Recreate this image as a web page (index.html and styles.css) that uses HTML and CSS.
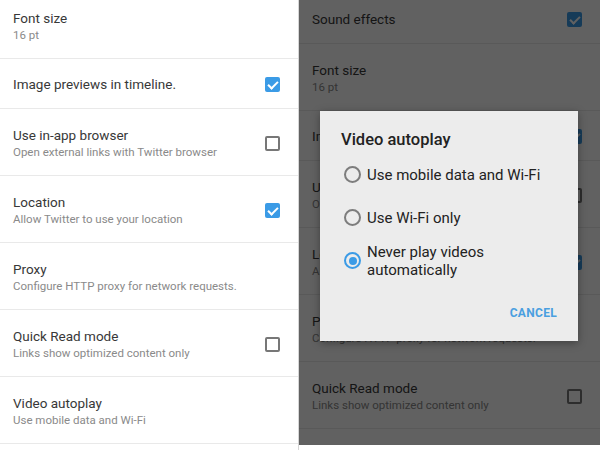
FILE: index.html
```html
<!DOCTYPE html>
<html lang="en">
<head>
    <meta charset="UTF-8">
    <meta name="viewport" content="width=device-width, initial-scale=1.0">
    <title>Twitter Settings - Video autoplay</title>
    <link rel="stylesheet" href="styles.css">
</head>
<body>
    <div class="screen">
        <!-- Left pane: settings list -->
        <div class="pane pane-left">
            <ul class="settings">
                <li class="row">
                    <div class="row-text">
                        <div class="row-title">Font size</div>
                        <div class="row-sub">16 pt</div>
                    </div>
                </li>
                <li class="row row-single">
                    <div class="row-text">
                        <div class="row-title">Image previews in timeline.</div>
                    </div>
                    <span class="check checked"></span>
                </li>
                <li class="row">
                    <div class="row-text">
                        <div class="row-title">Use in-app browser</div>
                        <div class="row-sub">Open external links with Twitter browser</div>
                    </div>
                    <span class="check"></span>
                </li>
                <li class="row">
                    <div class="row-text">
                        <div class="row-title">Location</div>
                        <div class="row-sub">Allow Twitter to use your location</div>
                    </div>
                    <span class="check checked"></span>
                </li>
                <li class="row">
                    <div class="row-text">
                        <div class="row-title">Proxy</div>
                        <div class="row-sub">Configure HTTP proxy for network requests.</div>
                    </div>
                </li>
                <li class="row">
                    <div class="row-text">
                        <div class="row-title">Quick Read mode</div>
                        <div class="row-sub">Links show optimized content only</div>
                    </div>
                    <span class="check"></span>
                </li>
                <li class="row">
                    <div class="row-text">
                        <div class="row-title">Video autoplay</div>
                        <div class="row-sub">Use mobile data and Wi-Fi</div>
                    </div>
                </li>
            </ul>
        </div>

        <!-- Right pane: same list with the autoplay dialog open -->
        <div class="pane pane-right">
            <ul class="settings">
                <li class="row row-single">
                    <div class="row-text">
                        <div class="row-title">Sound effects</div>
                    </div>
                    <span class="check checked"></span>
                </li>
                <li class="row">
                    <div class="row-text">
                        <div class="row-title">Font size</div>
                        <div class="row-sub">16 pt</div>
                    </div>
                </li>
                <li class="row row-single">
                    <div class="row-text">
                        <div class="row-title">Image previews in timeline.</div>
                    </div>
                    <span class="check checked"></span>
                </li>
                <li class="row">
                    <div class="row-text">
                        <div class="row-title">Use in-app browser</div>
                        <div class="row-sub">Open external links with Twitter browser</div>
                    </div>
                    <span class="check"></span>
                </li>
                <li class="row">
                    <div class="row-text">
                        <div class="row-title">Location</div>
                        <div class="row-sub">Allow Twitter to use your location</div>
                    </div>
                    <span class="check checked"></span>
                </li>
                <li class="row">
                    <div class="row-text">
                        <div class="row-title">Proxy</div>
                        <div class="row-sub">Configure HTTP proxy for network requests.</div>
                    </div>
                </li>
                <li class="row">
                    <div class="row-text">
                        <div class="row-title">Quick Read mode</div>
                        <div class="row-sub">Links show optimized content only</div>
                    </div>
                    <span class="check"></span>
                </li>
            </ul>

            <div class="scrim"></div>

            <div class="dialog">
                <div class="dialog-title">Video autoplay</div>
                <div class="options">
                    <label class="option">
                        <span class="radio"></span>
                        <span class="option-text">Use mobile data and Wi-Fi</span>
                    </label>
                    <label class="option">
                        <span class="radio"></span>
                        <span class="option-text">Use Wi-Fi only</span>
                    </label>
                    <label class="option">
                        <span class="radio selected"></span>
                        <span class="option-text">Never play videos<br>automatically</span>
                    </label>
                </div>
                <div class="dialog-actions">
                    <span class="btn-text">CANCEL</span>
                </div>
            </div>
        </div>
    </div>
</body>
</html>
```

FILE: styles.css
```css
body {
    margin: 0;
    font-family: Roboto, "Liberation Sans", Arial, sans-serif;
    background-color: #fff;
    color: #333;
}

.screen {
    display: flex;
    width: 600px;
    height: 450px;
    overflow: hidden;
}

.pane {
    position: relative;
    overflow: hidden;
    box-sizing: border-box;
}

.pane-left {
    width: 299px;
    height: 450px;
    border-right: 1px solid #d6d6d6;
}

.pane-right {
    width: 301px;
    height: 445px;
    background-color: #fff;
}

.settings {
    list-style: none;
    margin: 0;
    padding: 0;
}

.pane-left .settings {
    margin-top: -8px;
}

.pane-right .settings {
    margin-top: -6px;
}

.row {
    display: flex;
    align-items: center;
    justify-content: space-between;
    padding: 17px 18px 15px 13px;
    border-bottom: 1px solid #e9e9e9;
}

.row-single {
    padding-top: 16px;
    padding-bottom: 15px;
}

.row-title {
    font-size: 13.5px;
    line-height: 18px;
    color: #383838;
}

.row-sub {
    font-size: 11.5px;
    line-height: 16px;
    color: #8a8a8a;
}

/* Checkboxes */
.check {
    flex: none;
    width: 15px;
    height: 15px;
    box-sizing: border-box;
    border: 2px solid #777;
    border-radius: 2px;
}

.check.checked {
    border: none;
    background-color: #3b9be6;
    position: relative;
}

.check.checked::after {
    content: "";
    position: absolute;
    left: 5px;
    top: 2px;
    width: 4px;
    height: 8px;
    border: solid #fff;
    border-width: 0 2px 2px 0;
    transform: rotate(45deg);
}

/* Dimmed background behind the dialog */
.scrim {
    position: absolute;
    inset: 0;
    background-color: rgba(0, 0, 0, 0.62);
}

.dialog {
    position: absolute;
    left: 21px;
    top: 111px;
    width: 258px;
    background-color: #ececec;
    box-shadow: 0 2px 8px rgba(0, 0, 0, 0.35);
}

.dialog-title {
    padding: 17px 21px 0;
    font-size: 16.5px;
    line-height: 24px;
    font-weight: 500;
    color: #222;
}

.options {
    display: flex;
    flex-direction: column;
    padding-top: 1px;
}

.option {
    display: flex;
    align-items: center;
    gap: 6px;
    min-height: 43px;
    padding-left: 24px;
    font-size: 15px;
    line-height: 18px;
    color: #222;
}

.radio {
    flex: none;
    width: 17px;
    height: 17px;
    box-sizing: border-box;
    border: 2px solid #7d7d7d;
    border-radius: 50%;
}

.radio.selected {
    border-color: #3b9be6;
    position: relative;
}

.radio.selected::after {
    content: "";
    position: absolute;
    left: 2.5px;
    top: 2.5px;
    width: 8px;
    height: 8px;
    border-radius: 50%;
    background-color: #3b9be6;
}

.dialog-actions {
    display: flex;
    justify-content: flex-end;
    padding: 23px 21px 20px;
}

.btn-text {
    font-size: 12px;
    line-height: 16px;
    font-weight: 700;
    letter-spacing: 0.3px;
    color: #4a9fe0;
}
```
